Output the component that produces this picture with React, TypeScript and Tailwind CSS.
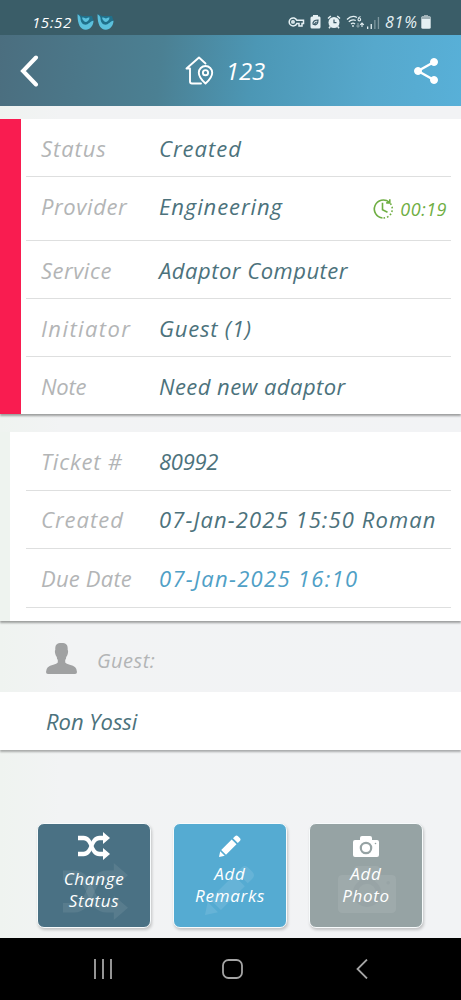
import type { ReactNode } from 'react';
import { clsx } from 'clsx';

type Row = {
  label: string;
  value: string;
  height: string;
  labelTracking: string;
  tracking: string;
  color?: string;
  timer?: string;
};

const statusRows: Row[] = [
  { label: 'Status', value: 'Created', height: 'h-[58px]', labelTracking: 'tracking-[0.9px]', tracking: 'tracking-[1px]' },
  { label: 'Provider', value: 'Engineering', height: 'h-[64px] pb-[5px]', labelTracking: 'tracking-[0.6px]', tracking: 'tracking-[0.9px]', timer: '00:19' },
  { label: 'Service', value: 'Adaptor Computer', height: 'h-[58px]', labelTracking: 'tracking-[0.5px]', tracking: 'tracking-[0.5px]' },
  { label: 'Initiator', value: 'Guest (1)', height: 'h-[58px]', labelTracking: 'tracking-[1.4px]', tracking: 'tracking-[0.8px]' },
  { label: 'Note', value: 'Need new adaptor', height: 'h-[57px]', labelTracking: 'tracking-[-0.2px]', tracking: 'tracking-[0.45px]' },
];

const ticketRows: Row[] = [
  { label: 'Ticket #', value: '80992', height: 'h-[59px]', labelTracking: 'tracking-[0.8px]', tracking: 'tracking-[-0.3px]' },
  { label: 'Created', value: '07-Jan-2025 15:50 Roman', height: 'h-[58px] pb-[1px]', labelTracking: 'tracking-[1px]', tracking: 'tracking-[1.1px]' },
  { label: 'Due Date', value: '07-Jan-2025 16:10', height: 'h-[59px] pb-[1px]', labelTracking: 'tracking-[0.2px]', tracking: 'tracking-[1.3px]', color: 'text-[#4fa0c6]' },
];

function BirdIcon() {
  return (
    <svg width="17" height="16" viewBox="0 0 17 16">
      <path d="M1 0l4 2h10l1.500 5-3 5-4.500 3-6-3z" fill="#20708b" />
      <path d="M.5.300C2 1 3 2.500 3.500 4 3.500 8 5.500 10.700 8.500 10.700c3 0 4.500-3.500 8-4C16.500 11.500 13 15.700 8.800 15.700 3.500 15.700.5 11 .5.300z" fill="#5bc0dc" />
      <path d="M5 3.800c2-1 3 .8 4 .7 1-.1 1.500-1.500 3.500-.9C12.500 6 10.500 8 9 8S5.500 6.500 5 3.800z" fill="#5bc0dc" />
    </svg>
  );
}

function StatusIcons() {
  return (
    <div className="flex items-center text-[#e5f0f3]">
      <svg width="17" height="12" viewBox="0 0 17 12" fill="none" stroke="currentColor" strokeWidth="1.5">
        <path d="M8.800 4.200A4 4 0 1 0 8.800 7.600H11v2.300h3V7.600h1.500V4.200z" />
        <circle cx="5" cy="5.900" r="1.200" />
      </svg>
      <svg className="ml-[5px]" width="11" height="14" viewBox="0 0 11 14">
        <path d="M3 0h5v1.500h1.500Q10.500 1.500 10.500 3v9q0 1.500-1.500 1.500H2Q.5 13.500.5 12V3q0-1.500 1.500-1.500h1z" fill="currentColor" />
        <path d="M3 9.500C2.500 6 5 5 8 5c0 3.500-1.500 5.500-4 4.500l2.500-2.700" stroke="#3a5966" strokeWidth="1.200" fill="none" />
      </svg>
      <svg className="ml-[6px]" width="14" height="14" viewBox="0 0 14 14">
        <circle cx="7" cy="7.500" r="5.500" fill="currentColor" />
        <path d="M1 3.500 3.800 1M13 3.500 10.200 1M3.300 11.500 2 13.200M10.700 11.500l1.300 1.700" stroke="currentColor" strokeWidth="1.500" />
        <path d="M7 4.500v3.200h2.500" stroke="#3a5966" strokeWidth="1.200" fill="none" />
      </svg>
      <svg className="ml-[5px]" width="20" height="14" viewBox="0 0 20 14" fill="none" stroke="currentColor" strokeWidth="1.300">
        <path d="M1 4.500Q6-.5 11 2.500M2.800 6.800Q6 3.800 9.800 5.500M5 9q2-1.600 4 0" />
        <circle cx="7" cy="11" r=".9" fill="currentColor" stroke="none" />
        <path d="M14.500 1.500Q12 2.500 12 4.500a1.300 1.300 0 1 0 1.300-1.200M16 12V8m-1.800 1.800L16 8l1.800 1.800" strokeWidth="1.100" />
        <path d="M12 8v4m-1.500-1.500L12 12l1.500-1.500" opacity=".4" />
      </svg>
      <svg className="ml-[1px]" width="13" height="13" viewBox="0 0 13 13" fill="currentColor">
        <path d="M0 10.500h1.300V13H0zM3.600 8h1.300v5H3.600z" />
        <path d="M7.200 4h1.300v9H7.200zM10.800 1h1.300v12h-1.300z" opacity=".4" />
      </svg>
      <span className="ml-[5px] w-[36px] whitespace-nowrap text-[16px] leading-none tracking-[0.8px]">81%</span>
      <svg width="10" height="14" viewBox="0 0 10 14">
        <path d="M3 0h4v1.500H3z" fill="#9fb0b6" />
        <rect x=".3" y="1.200" width="9.400" height="12.500" rx="1.500" fill="currentColor" />
        <path d="M.3 2.700q0-1.500 1.500-1.500h6.400q1.500 0 1.500 1.500V4H.3z" fill="#9fb0b6" />
      </svg>
    </div>
  );
}

function HousePinIcon() {
  return (
    <svg width="30" height="30" viewBox="0 0 30 30" fill="none" stroke="white" strokeWidth="1.900" strokeLinecap="round" strokeLinejoin="round">
      <path d="M20.500 7.500 14 1.500 1.500 12.500H5V25.500q0 2 2 2H16" />
      <path d="M20.500 27.500q-6.700-6-6.700-10.800a6.700 6.700 0 0 1 13.400 0Q27.200 21.500 20.500 27.500z" />
      <circle cx="20.500" cy="16.700" r="2.600" />
    </svg>
  );
}

function ShareIcon() {
  return (
    <svg width="24" height="26" viewBox="0 0 24 26" fill="white" stroke="white">
      <path d="M20 4 4 13l16 9" fill="none" strokeWidth="2.400" />
      <circle cx="20" cy="4" r="3.500" />
      <circle cx="4" cy="13" r="3.500" />
      <circle cx="20" cy="22" r="3.500" />
    </svg>
  );
}

function TimerIcon() {
  return (
    <svg width="22" height="22" viewBox="0 0 22 22" fill="none" stroke="#6fae43" strokeWidth="1.600">
      <path d="M10.500 20A9 9 0 1 1 17.200 4.200" />
      <path d="M11.500 20A9 9 0 0 0 18 5" strokeDasharray="1.600 2" />
      <path d="M17.800 1.300v3.600h-3.600" />
      <path d="M10.500 4.800v7l5 2.500" />
    </svg>
  );
}

function ShuffleIcon({ className }: { className: string }) {
  return (
    <svg className={className} viewBox="0 0 32 28" fill="currentColor">
      <path d="M0 3.700h5.500C16 3.700 14 19.700 21.500 19.700H25V16l7 6-7 6v-3.700h-3.500C11 24.300 13 8.300 5.500 8.300H0z" />
      <path d="M0 19.700h5.500C13 19.700 11 3.700 21.500 3.700H25V0l7 6-7 6V8.300h-3.500C14 8.300 16 24.300 5.500 24.300H0z" />
    </svg>
  );
}

function PencilIcon({ className }: { className: string }) {
  return (
    <svg className={className} viewBox="0 0 22 22" fill="currentColor">
      <path d="M0 22l1.200-5.700 4.500 4.500zM2.200 15 12.700 4.500l4.800 4.800L7 19.800zM14 3.200l2-2q1.500-1.500 3 0l1.800 1.800q1.500 1.500 0 3l-2 2z" />
    </svg>
  );
}

function CameraIcon({ className, hole }: { className: string; hole: string }) {
  return (
    <svg className={className} viewBox="0 0 26 21">
      <path d="M2 4h5V2q0-2 2-2h8q2 0 2 2v2h5q2 0 2 2v13q0 2-2 2H2q-2 0-2-2V6q0-2 2-2z" fill="currentColor" />
      <circle cx="13" cy="12" r="5.200" fill="none" stroke={hole} strokeWidth="2.200" />
      <circle cx="22.500" cy="7.500" r=".8" fill={hole} />
    </svg>
  );
}

function DetailRow({ row, last }: { row: Row; last?: boolean }) {
  return (
    <div className={clsx('flex items-center whitespace-nowrap pl-[15px] text-[22px] leading-none', row.height, !last && 'border-b border-[#dedfdf]')}>
      <span className={clsx('w-[118px] shrink-0 text-[#b3b5b6]', row.labelTracking)}>{row.label}</span>
      <span className={clsx('font-medium', row.color ?? 'text-[#4c727c]', row.tracking)}>{row.value}</span>
      {row.timer && (
        <span className="ml-auto flex items-center gap-[6px] pr-[4px] pt-[5px] text-[18px] text-[#6fae43]">
          <TimerIcon />
          <span className="tracking-[0.5px]">{row.timer}</span>
        </span>
      )}
    </div>
  );
}

type ActionButtonProps = {
  color: string;
  icon: ReactNode;
  ghost: ReactNode;
  lines: string[];
  textOffset: string;
};

function ActionButton({ color, icon, ghost, lines, textOffset }: ActionButtonProps) {
  return (
    <button className={clsx('relative h-[105px] w-[114px] rounded-[7px] border border-[#f8fbfc] text-[17px] font-medium italic leading-[22px] text-white shadow-[1px_2px_3px_rgba(0,0,0,0.2)]', color)}>
      {ghost}
      <span className="relative flex h-full flex-col items-center">
        <span className="flex h-[44px] shrink-0 items-center justify-center">{icon}</span>
        <span className={clsx('flex flex-col items-center tracking-[0.7px]', textOffset)}>
          {lines.map((line) => (
            <span key={line}>{line}</span>
          ))}
        </span>
      </span>
    </button>
  );
}

function App() {
  return (
    <div className="flex h-[1000px] w-[461px] flex-col overflow-hidden bg-[linear-gradient(90deg,#eff3f0_0,#f2f3f4_60px,#f2f3f5_100%)] font-['Open_Sans',sans-serif] italic">
      {/* Phone status bar */}
      <div className="flex h-[35px] shrink-0 items-center justify-between bg-[#3a5d68] pl-[32px] pr-[30px] pt-[9px] text-white">
        <div className="flex items-center">
          <span className="w-[45px] text-[15px] leading-none tracking-[0.6px]">15:52</span>
          <BirdIcon />
          <span className="w-[3px]" />
          <BirdIcon />
        </div>
        <StatusIcons />
      </div>

      {/* Header */}
      <header className="flex h-[71px] shrink-0 items-center justify-between bg-[linear-gradient(97deg,#4b6e7f_0%,#4b8093_35%,#4c97b5_55%,#56a8cc_80%,#58b0d8_100%)] pl-[20px] pr-[23px] text-white">
        <svg width="19" height="32" viewBox="0 0 19 32" fill="none" stroke="white" strokeWidth="4" strokeLinecap="round">
          <path d="M16 2.500 3 16l13 13.500" />
        </svg>
        <div className="flex items-center gap-[11px] pr-[3px]">
          <HousePinIcon />
          <span className="text-[24px] font-medium leading-none">123</span>
        </div>
        <ShareIcon />
      </header>

      <main className="flex flex-1 flex-col pt-[13px]">
        <section className="flex h-[295px] shrink-0 bg-white shadow-[0_2px_2px_rgba(0,0,0,0.35)]">
          <div className="w-[21px] bg-[#f91c50]" />
          <div className="ml-[5px] w-[425px]">
            {statusRows.map((row, i) => (
              <DetailRow key={row.label} row={row} last={i === statusRows.length - 1} />
            ))}
          </div>
        </section>

        <section className="mt-[18px] flex h-[189px] shrink-0 bg-white shadow-[0_2px_2px_rgba(0,0,0,0.35)]">
          <div className="w-[10px] bg-[#eef3ef]" />
          <div className="ml-[16px] w-[425px]">
            {ticketRows.map((row) => (
              <DetailRow key={row.label} row={row} />
            ))}
          </div>
        </section>

        <div className="flex h-[71px] shrink-0 items-center pl-[46px] pt-[4px]">
          <svg width="31" height="31" viewBox="0 0 31 31" fill="#a0a1a2">
            <path d="M15.500 0C20 0 22 1.500 21.700 7q.8.500 0 4-.5 2-1.500 3 0 2-1 3v2.500q1 1.500 4.500 2.200Q31 23 31 29q0 2-2 2H2q-2 0-2-2 0-6 7.300-7.300 3.500-.7 4.500-2.200V17q-1-1-1-3-1-1-1.500-3-.8-3.500 0-4C9 1.500 11 0 15.500 0z" />
          </svg>
          <span className="ml-[20px] pt-[4px] text-[20px] leading-none tracking-[0.5px] text-[#b3b5b6]">Guest:</span>
        </div>
        <div className="flex h-[58px] shrink-0 items-center bg-white pl-[46px] text-[22px] font-medium leading-none text-[#4c727c] shadow-[0_2px_2px_rgba(0,0,0,0.3)]">
          <span>Ron Yossi</span>
        </div>

        <div className="mt-[73px] flex gap-[22px] pl-[37px]">
          <ActionButton
            color="bg-[#4a7184]"
            icon={<ShuffleIcon className="h-[28px] w-[32px]" />}
            ghost={<ShuffleIcon className="absolute left-[25px] top-[39px] h-[57px] w-[65px] text-white/8" />}
            lines={['Change', 'Status']}
            textOffset="mt-0"
          />
          <ActionButton
            color="bg-[#55abd2]"
            icon={<PencilIcon className="h-[22px] w-[22px]" />}
            ghost={<PencilIcon className="absolute left-[31px] top-[41px] h-[50px] w-[50px] text-white/10" />}
            lines={['Add', 'Remarks']}
            textOffset="-mt-[5px]"
          />
          <ActionButton
            color="bg-[#96a3a4]"
            icon={<CameraIcon className="h-[21px] w-[26px]" hole="#96a3a4" />}
            ghost={<CameraIcon className="absolute left-[28px] top-[42px] h-[47px] w-[58px] text-white/8" hole="#98a4a6" />}
            lines={['Add', 'Photo']}
            textOffset="-mt-[5px]"
          />
        </div>
      </main>

      {/* Android navigation */}
      <nav className="flex h-[62px] shrink-0 items-center justify-between bg-black pl-[93px] pr-[93px]">
        <svg width="20" height="20" viewBox="0 0 20 20" stroke="#a5a5a5" strokeWidth="1.800">
          <path d="M2 0v20M10 0v20M18 0v20" />
        </svg>
        <svg className="-ml-[4px]" width="21" height="20" viewBox="0 0 21 20" fill="none" stroke="#a5a5a5" strokeWidth="1.800">
          <rect x="1" y="1" width="19" height="18" rx="5.500" />
        </svg>
        <svg width="12" height="20" viewBox="0 0 12 20" fill="none" stroke="#a5a5a5" strokeWidth="1.800">
          <path d="M11 .5 1.500 10l9.500 9.500" />
        </svg>
      </nav>
    </div>
  );
}

export default App;
